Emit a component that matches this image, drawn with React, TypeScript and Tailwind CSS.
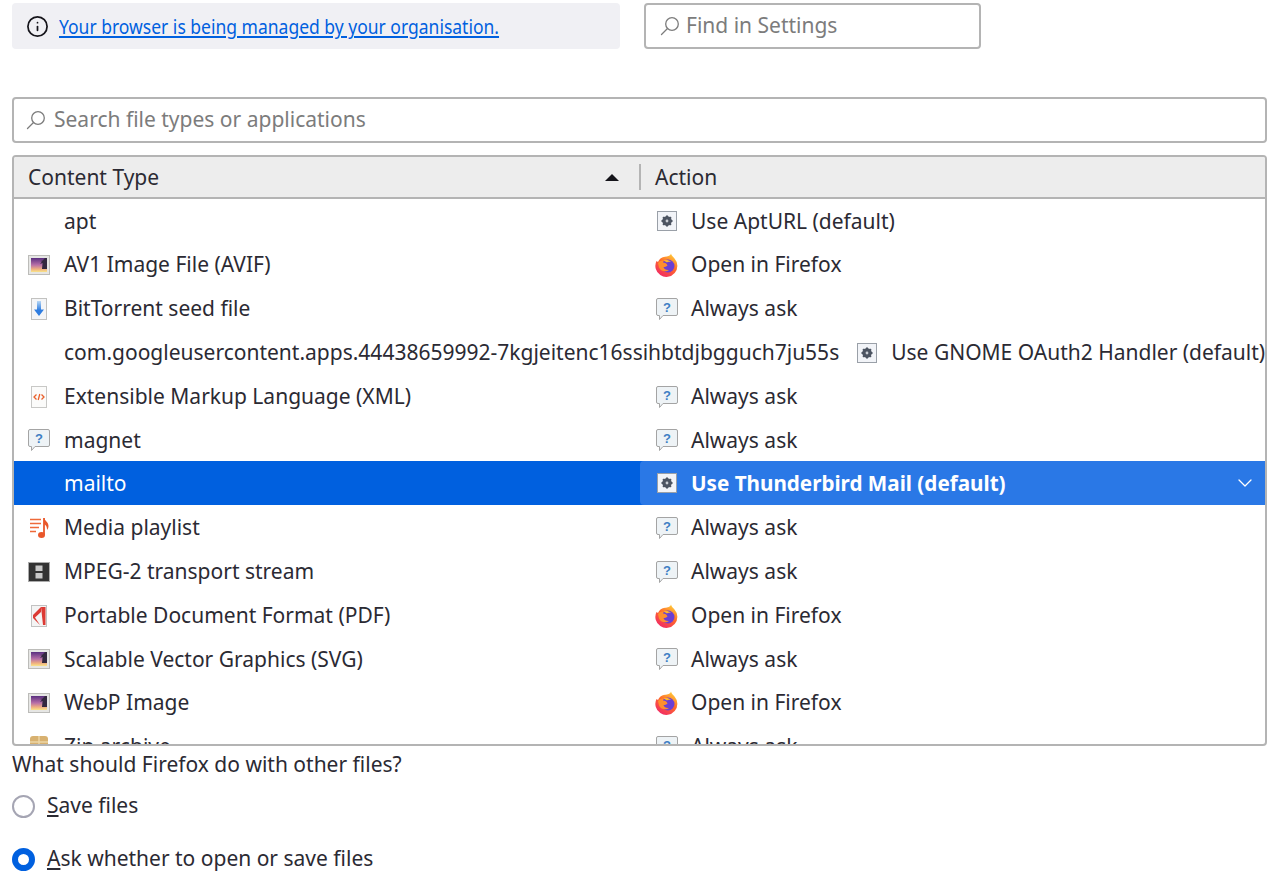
import { ChevronDown, Info } from 'lucide-react'

type IconName = 'none' | 'image' | 'torrent' | 'xml' | 'bubble' | 'playlist' | 'film' | 'pdf' | 'zip' | 'gear' | 'firefox'

const rows: { name: string; icon: IconName; action: string; actionIcon: IconName; selected?: boolean }[] = [
  { name: 'apt', icon: 'none', action: 'Use AptURL (default)', actionIcon: 'gear' },
  { name: 'AV1 Image File (AVIF)', icon: 'image', action: 'Open in Firefox', actionIcon: 'firefox' },
  { name: 'BitTorrent seed file', icon: 'torrent', action: 'Always ask', actionIcon: 'bubble' },
  {
    name: 'com.googleusercontent.apps.44438659992-7kgjeitenc16ssihbtdjbgguch7ju55s',
    icon: 'none',
    action: 'Use GNOME OAuth2 Handler (default)',
    actionIcon: 'gear',
  },
  { name: 'Extensible Markup Language (XML)', icon: 'xml', action: 'Always ask', actionIcon: 'bubble' },
  { name: 'magnet', icon: 'bubble', action: 'Always ask', actionIcon: 'bubble' },
  { name: 'mailto', icon: 'none', action: 'Use Thunderbird Mail (default)', actionIcon: 'gear', selected: true },
  { name: 'Media playlist', icon: 'playlist', action: 'Always ask', actionIcon: 'bubble' },
  { name: 'MPEG-2 transport stream', icon: 'film', action: 'Always ask', actionIcon: 'bubble' },
  { name: 'Portable Document Format (PDF)', icon: 'pdf', action: 'Open in Firefox', actionIcon: 'firefox' },
  { name: 'Scalable Vector Graphics (SVG)', icon: 'image', action: 'Always ask', actionIcon: 'bubble' },
  { name: 'WebP Image', icon: 'image', action: 'Open in Firefox', actionIcon: 'firefox' },
  { name: 'Zip archive', icon: 'zip', action: 'Always ask', actionIcon: 'bubble' },
]

function FileIcon({ name }: { name: IconName }) {
  if (name === 'none') return <span className="w-6 h-6 shrink-0" />
  return (
    <svg width="24" height="24" viewBox="0 0 24 24" className="shrink-0">
      {name === 'image' && (
        <>
          <defs>
            <linearGradient id="sky" x1="0" y1="0" x2="0" y2="1">
              <stop offset="0" stopColor="#5a2f80" />
              <stop offset="0.5" stopColor="#b870a8" />
              <stop offset="0.8" stopColor="#f0b080" />
              <stop offset="1" stopColor="#f8e58a" />
            </linearGradient>
          </defs>
          <rect x="1.500" y="2.500" width="21" height="19" fill="#e6e6e4" stroke="#bcbcb9" />
          <rect x="4" y="5" width="16" height="14" fill="url(#sky)" />
          <path d="M15 16l.6-6-2.600 1 2-2.500-2-.5 2.600-.5L18 5h2v11z" fill="#33283f" />
        </>
      )}
      {name === 'torrent' && (
        <>
          <defs>
            <linearGradient id="tor" x1="0" y1="0" x2="0" y2="1">
              <stop offset="0" stopColor="#b9d8f5" />
              <stop offset="0.6" stopColor="#2f7de0" />
            </linearGradient>
          </defs>
          <rect x="4.500" y="1.500" width="15" height="21" fill="#f4f5f7" stroke="#c2c2c0" />
          <path d="M10 4h4v8.500h3L12 19l-5-6.500h3z" fill="url(#tor)" />
        </>
      )}
      {name === 'xml' && (
        <>
          <rect x="4.500" y="1.500" width="15" height="21" fill="#fbfbfa" stroke="#c8c8c6" />
          <path d="M9.500 9.500L7 12l2.500 2.500M14.500 9.500L17 12l-2.500 2.500M12.800 9l-1.600 6" fill="none" stroke="#e9602c" strokeWidth="1.300" />
        </>
      )}
      {name === 'bubble' && (
        <>
          <path
            d="M3 1.500h18a1.500 1.500 0 0 1 1.500 1.500v14a1.500 1.500 0 0 1-1.500 1.500H8l-3.500 4v-4H3A1.500 1.500 0 0 1 1.500 17V3A1.500 1.500 0 0 1 3 1.500z"
            fill="#eef3f6"
            stroke="#a4a4a4"
          />
          <text x="12" y="15" textAnchor="middle" fontSize="13" fontWeight="700" fill="#3f7fc4" fontFamily="'Liberation Sans', sans-serif">
            ?
          </text>
        </>
      )}
      {name === 'playlist' && (
        <>
          <path d="M3 3.500h11M3 7.500h11M3 11.500h9M3 15.500h6" stroke="#ee6a3a" strokeWidth="1.400" fill="none" />
          <path d="M17 2v17" stroke="#e9572b" strokeWidth="1.800" fill="none" />
          <ellipse cx="14.500" cy="19" rx="3.500" ry="3" fill="#e9572b" />
          <path d="M17 2c1 3 4.500 4 4.500 8 0 2-.8 3-1.500 4 .3-3-1-5-3-6z" fill="#e9572b" />
        </>
      )}
      {name === 'film' && (
        <>
          <rect x="1.500" y="2.500" width="21" height="19" fill="#333" stroke="#ababab" />
          <rect x="8.500" y="5.500" width="7" height="5.500" fill="#c8c8c8" />
          <rect x="8.500" y="13" width="7" height="5.500" fill="#c8c8c8" />
        </>
      )}
      {name === 'pdf' && (
        <>
          <rect x="4.500" y="1.500" width="15" height="21" fill="#f4f4f4" stroke="#c2c2c2" />
          <path d="M14 3h4.500v18H16zM14 3L6 11v3l7 7-5-7.500L14 8z" fill="#dc3a34" />
        </>
      )}
      {name === 'zip' && (
        <>
          <path d="M3 4a3 3 0 0 1 3-3h12a3 3 0 0 1 3 3v18H3z" fill="#d8b170" />
          <path d="M3 7h18M12 1v12" stroke="#ecd6a6" strokeWidth="1.500" />
        </>
      )}
      {name === 'gear' && (
        <>
          <rect x="2.500" y="2.500" width="19" height="19" fill="#f2f4f8" stroke="#9aa0a8" />
          <circle cx="12" cy="12" r="4.800" fill="#4d5562" />
          <path d="M12 6.500v11M6.500 12h11M8.100 8.100l7.800 7.800M15.900 8.100l-7.800 7.800" stroke="#4d5562" strokeWidth="2" />
          <circle cx="12" cy="12" r="1.400" fill="#c9cdd4" />
        </>
      )}
      {name === 'firefox' && (
        <>
          <defs>
            <linearGradient id="fx" x1="0.800" y1="0" x2="0.200" y2="1">
              <stop offset="0" stopColor="#ffd43a" />
              <stop offset="0.450" stopColor="#ff6a2a" />
              <stop offset="1" stopColor="#f0256a" />
            </linearGradient>
          </defs>
          <path d="M16 .5c.5 2.500 2 3 3.500 5a11 11 0 1 1-18 2.500l1.500 1C4 6 7 4 10 3.800 12.500 3.600 15.500 3 16 .5z" fill="url(#fx)" />
          <circle cx="13" cy="13" r="6.500" fill="#6b3fd4" />
          <path d="M3 10c1-1.500 3-3 5.500-2.500L8 9.500c2 .2 4 1 4.500 3-1 1.500-3 1.500-4 1.500.5 2 3 3.500 5.500 3-3 2.500-8 1.500-10-2.500z" fill="#ff8f2e" />
          <path d="M8.500 7.500c2.500-1 5.500-.5 7.500 1.500-2-.5-3.500-.3-4 .5z" fill="#ffb52e" />
        </>
      )}
    </svg>
  )
}

function SearchGlyph() {
  return (
    <svg width="20" height="20" viewBox="0 0 20 20" fill="none" stroke="currentColor" strokeWidth="1.300" className="shrink-0">
      <circle cx="12" cy="8" r="6.300" />
      <path d="M7.500 12.500L1.500 18.500" strokeLinecap="round" />
    </svg>
  )
}

function Radio({ checked, accessKey, rest }: { checked?: boolean; accessKey: string; rest: string }) {
  return (
    <label className="flex items-center gap-3 h-6">
      <span
        className={
          checked
            ? 'w-[23px] h-[23px] rounded-full border-[6px] border-[#0060df] bg-white'
            : 'w-[23px] h-[23px] rounded-full border-2 border-[#a5a5b3] bg-white'
        }
      />
      <span>
        <span className="underline underline-offset-2">{accessKey}</span>
        {rest}
      </span>
    </label>
  )
}

export default function App() {
  return (
    <div className="h-[880px] overflow-hidden bg-white pl-3 pr-[13px] pt-[3px] text-[21px] text-[#2b2a33] font-['Noto_Sans','Open_Sans',sans-serif]">
      <div className="flex gap-6">
        <div className="w-[608px] h-[46px] flex items-center gap-[10px] pl-[14px] rounded-[4px] bg-[#f0f0f4]">
          <Info size={23} strokeWidth={1.8} className="text-[#15141a]" />
          {/* the reference face is narrower in this banner */}
          <a className="inline-block whitespace-nowrap origin-left scale-x-[0.875] pt-[2px] text-[20px] text-[#0060df] underline underline-offset-2">
            Your browser is being managed by your organisation.
          </a>
        </div>
        <div className="w-[337px] h-[46px] flex items-center gap-[6px] pl-[14px] rounded-[4px] border-2 border-[#b4b4b4] text-[#7c7c7c]">
          <SearchGlyph />
          <span>Find in Settings</span>
        </div>
      </div>

      <div className="mt-12 h-[46px] flex items-center gap-[8px] pl-[12px] rounded-[4px] border-2 border-[#b4b4b4] text-[#7c7c7c]">
        <SearchGlyph />
        <span>Search file types or applications</span>
      </div>

      <div className="mt-3 h-[591px] overflow-hidden rounded-[4px] border-2 border-[#b4b4b4]">
        <div className="h-[41.5px] flex items-center bg-[#ededed] border-b-2 border-[#b4b4b4]">
          <div className="w-[625px] shrink-0 flex items-center justify-between pl-[14px] pr-[20px] pt-[2px]">
            <span>Content Type</span>
            <span className="w-0 h-0 border-x-[7px] border-x-transparent border-b-[7px] border-b-[#15141a]" />
          </div>
          <div className="h-[26px] border-l-2 border-[#b4b4b4] pl-[14px] pt-[2px] flex items-center">Action</div>
        </div>
        {rows.map((row) => (
          <div
            key={row.name}
            className={
              row.selected
                ? 'h-[43.8px] flex items-center bg-[#0060df] text-white'
                : 'h-[43.8px] flex items-center'
            }
          >
            <div className="min-w-[626px] shrink-0 flex items-center gap-[13px] pl-[13px] pr-[1px] pt-[2px] whitespace-nowrap">
              <FileIcon name={row.icon} />
              <span>{row.name}</span>
            </div>
            <div
              className={
                row.selected
                  ? 'h-full flex-1 flex items-center gap-[12px] pl-[15px] pr-[8px] rounded-l-[4px] bg-[#2a78e6] text-[20.65px] font-bold whitespace-nowrap'
                  : 'flex-1 flex items-center gap-[12px] pl-[15px] pt-[2px] whitespace-nowrap'
              }
            >
              <FileIcon name={row.actionIcon} />
              <span className="flex-1">{row.action}</span>
              {row.selected && <ChevronDown size={24} strokeWidth={1.3} />}
            </div>
          </div>
        ))}
      </div>

      <p className="mt-1 leading-[28px]">What should Firefox do with other files?</p>
      <div className="mt-[16px] flex flex-col gap-[29px]">
        <Radio accessKey="S" rest="ave files" />
        <Radio checked accessKey="A" rest="sk whether to open or save files" />
      </div>
    </div>
  )
}
